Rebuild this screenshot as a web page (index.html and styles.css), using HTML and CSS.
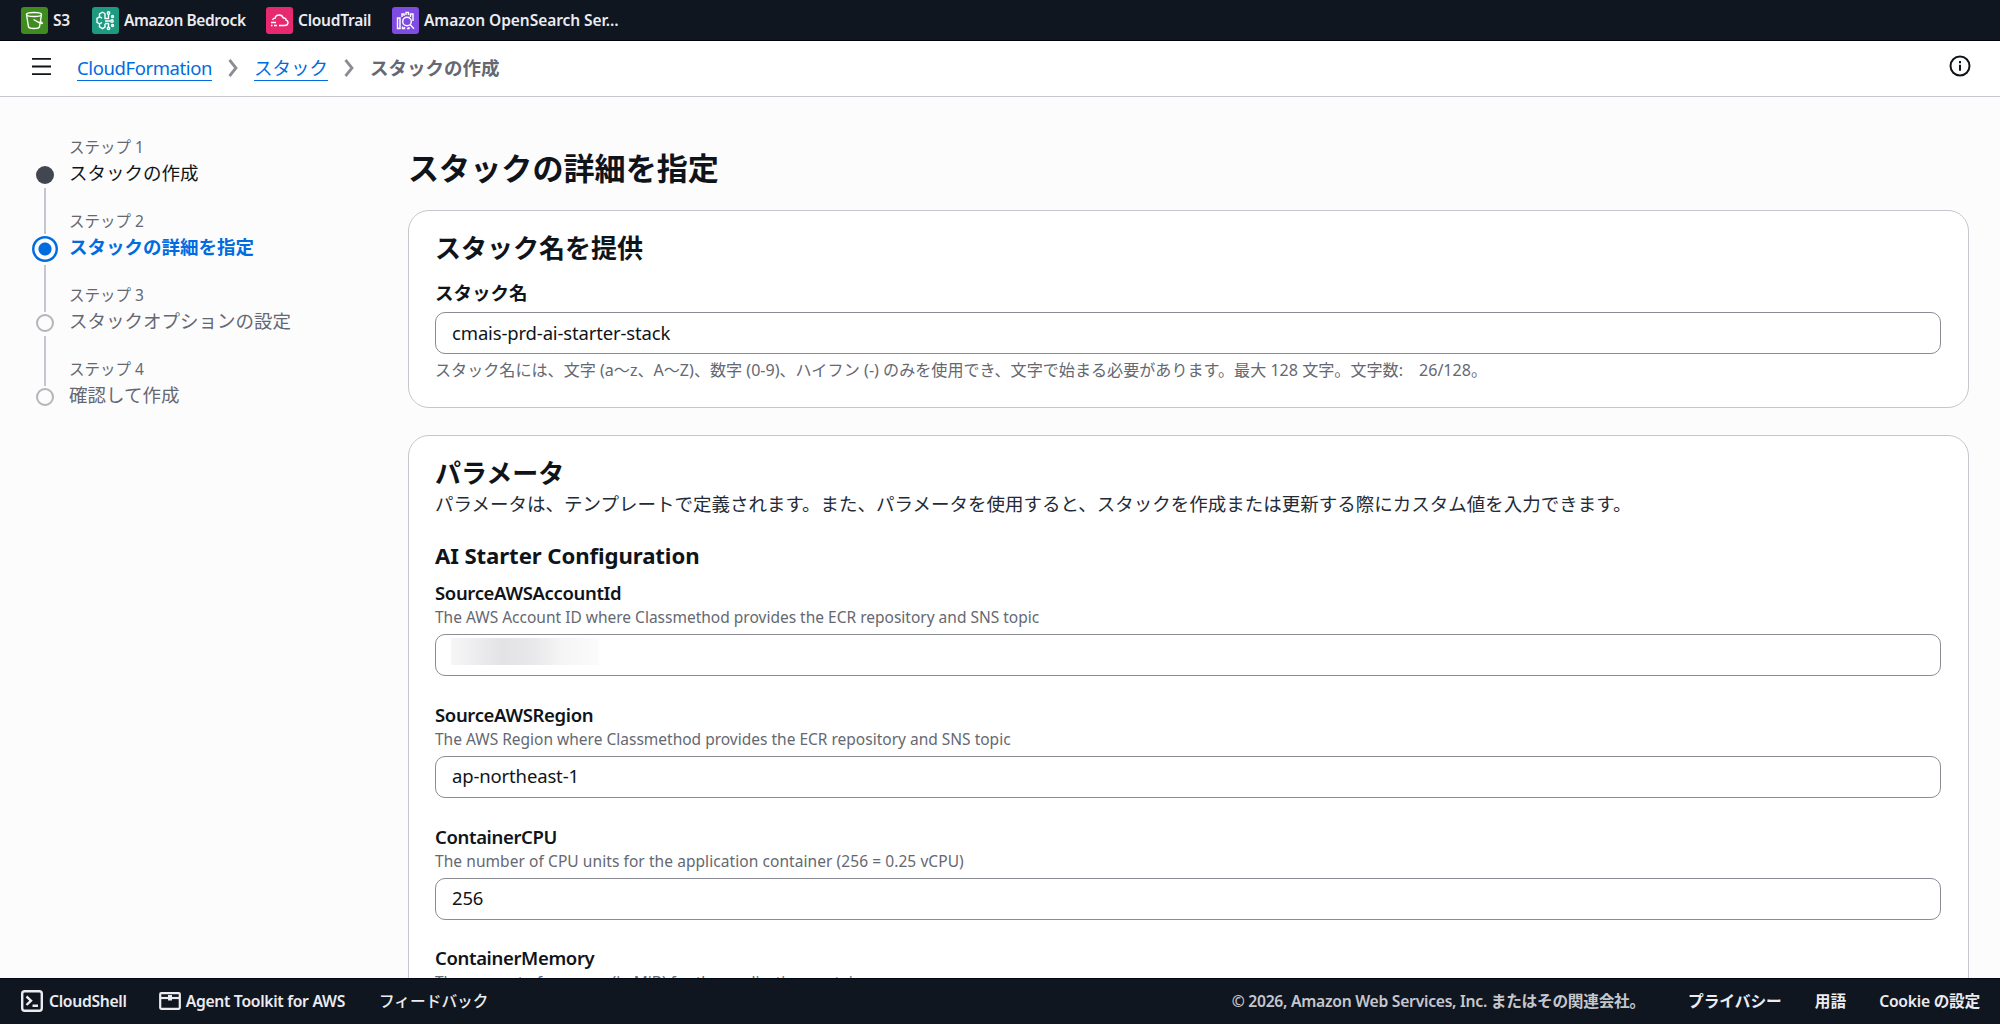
FILE: index.html
```html
<!DOCTYPE html>
<html lang="ja">
<head>
    <meta charset="UTF-8">
    <meta name="viewport" content="width=device-width, initial-scale=1.0">
    <title>スタックの作成 | CloudFormation</title>
    <link rel="stylesheet" href="styles.css">
</head>
<body>
    <nav class="favorites">
        <a class="favorite s3" href="#">
            <svg class="service-icon" viewBox="0 0 27 27">
                <rect class="tile" width="27" height="27" rx="3"/>
                <ellipse cx="13" cy="7.5" rx="7.5" ry="2"/>
                <path d="M5.500 7.500l2 12.300c.4 1.200 2.700 1.700 5.500 1.700s5.100-.5 5.500-1.700l2-12.300M12.500 12.500l6.500 3.600c3 1.200 3.200 0 .8-1.600"/>
            </svg>
            <span class="favorite-name">S3</span>
        </a>
        <a class="favorite bedrock" href="#">
            <svg class="service-icon" viewBox="0 0 27 27">
                <rect class="tile" width="27" height="27" rx="3"/>
                <path d="M13 6.500l-2.500-1.300-3 1.700v3l-2.500 1.500v4l2.500 1.500v3l3 1.800 2.500-1.500v-3.500M7.500 9.900l2.500 1.300M7.500 17l2.500-1.600M13 6.500v5h3.500v-4M13 14h5.500M13 16.500h3.500v3.500"/>
                <circle cx="16.500" cy="6" r="1.200"/><circle cx="20" cy="14" r="1.200"/><circle cx="16.500" cy="21.300" r="1.200"/><circle cx="20.500" cy="9.500" r="1"/><circle cx="20.500" cy="18.500" r="1"/>
            </svg>
            <span class="favorite-name">Amazon Bedrock</span>
        </a>
        <a class="favorite cloudtrail" href="#">
            <svg class="service-icon" viewBox="0 0 27 27">
                <rect class="tile" width="27" height="27" rx="3"/>
                <path d="M6.500 13c.5-1.300 1.500-1.900 2.700-1.900.3-2.200 2-3.100 4-3.100 2.200 0 3.500 1.200 4.100 3 2.100-.2 2.700 1 2.700 2 1.300.5 2 1.400 2 2.600 0 1.900-1.400 2.900-3.300 2.900H13M5 15.500h5M5 18.500h1.500M8 18.500h3"/>
            </svg>
            <span class="favorite-name">CloudTrail</span>
        </a>
        <a class="favorite opensearch" href="#">
            <svg class="service-icon" viewBox="0 0 27 27">
                <rect class="tile" width="27" height="27" rx="3"/>
                <circle cx="15" cy="14.500" r="4.300"/>
                <path d="M18.300 17.800l3.700 4M5.500 11h2.500v10.500h-2.500zM10 10V7h2v2M14 8V5.500h2.500V8M18.500 10V7h2.500v7M10.500 19.500v2h2v-1.500M15 21.500h2v-1.500"/>
            </svg>
            <span class="favorite-name">Amazon OpenSearch Ser…</span>
        </a>
    </nav>

    <header class="page-header">
        <svg class="menu-icon" viewBox="0 0 20 20"><path d="M0 2h20M0 10h20M0 18h20"/></svg>
        <ol class="breadcrumbs">
            <li><a class="crumb-service" href="#">CloudFormation</a></li>
            <li><svg class="chevron" viewBox="0 0 10 18"><path d="M1.500 1l6.500 8-6.500 8"/></svg></li>
            <li><a href="#">スタック</a></li>
            <li><svg class="chevron" viewBox="0 0 10 18"><path d="M1.500 1l6.500 8-6.500 8"/></svg></li>
            <li class="current">スタックの作成</li>
        </ol>
        <svg class="info-icon" viewBox="0 0 22 22"><circle cx="11" cy="11" r="9.500"/><path d="M11 9.800v6M11 6v2.200"/></svg>
    </header>

    <main class="layout">
        <ol class="steps">
            <li class="step done">
                <span class="marker"></span>
                <small>ステップ 1</small>
                <span class="step-name">スタックの作成</span>
            </li>
            <li class="step active">
                <span class="marker"></span>
                <small>ステップ 2</small>
                <span class="step-name">スタックの詳細を指定</span>
            </li>
            <li class="step">
                <span class="marker"></span>
                <small>ステップ 3</small>
                <span class="step-name">スタックオプションの設定</span>
            </li>
            <li class="step">
                <span class="marker"></span>
                <small>ステップ 4</small>
                <span class="step-name">確認して作成</span>
            </li>
        </ol>

        <form class="content">
            <h1>スタックの詳細を指定</h1>

            <section class="card">
                <h2>スタック名を提供</h2>
                <div class="form-group stack-name">
                    <label for="stackName">スタック名</label>
                    <input type="text" id="stackName" value="cmais-prd-ai-starter-stack">
                    <small>スタック名には、文字 (a〜z、A〜Z)、数字 (0-9)、ハイフン (-) のみを使用でき、文字で始まる必要があります。最大 128 文字。文字数:<span class="count">26/128。</span></small>
                </div>
            </section>

            <section class="card">
                <h2>パラメータ</h2>
                <p class="description">パラメータは、テンプレートで定義されます。また、パラメータを使用すると、スタックを作成または更新する際にカスタム値を入力できます。</p>
                <h3>AI Starter Configuration</h3>
                <div class="form-group">
                    <label for="accountId">SourceAWSAccountId</label>
                    <small>The AWS Account ID where Classmethod provides the ECR repository and SNS topic</small>
                    <div class="input-wrap">
                        <input type="text" id="accountId">
                        <span class="redacted"></span>
                    </div>
                </div>
                <div class="form-group">
                    <label for="region">SourceAWSRegion</label>
                    <small>The AWS Region where Classmethod provides the ECR repository and SNS topic</small>
                    <input type="text" id="region" value="ap-northeast-1">
                </div>
                <div class="form-group">
                    <label for="cpu">ContainerCPU</label>
                    <small class="cpu-hint">The number of CPU units for the application container (256 = 0.25 vCPU)</small>
                    <input type="text" id="cpu" value="256">
                </div>
                <div class="form-group">
                    <label for="memory">ContainerMemory</label>
                    <small>The amount of memory (in MiB) for the application container</small>
                    <input type="text" id="memory" value="512">
                </div>
            </section>
        </form>
    </main>

    <footer class="footer">
        <a class="tool" href="#">
            <svg class="shell-icon" viewBox="0 0 22 22"><rect x="1.200" y="1.200" width="19.600" height="19.600" rx="2.500"/><path d="M5.500 6.500l4.500 4.200-4.500 4.300M11.500 15.800h5.500"/></svg>
            <span class="shell-name">CloudShell</span>
        </a>
        <a class="tool toolkit" href="#">
            <svg class="toolkit-icon" viewBox="0 0 22 18"><rect x="1.200" y="1.200" width="19.600" height="15.600" rx="1"/><path d="M1.200 6h19.600"/><path class="clasp" d="M11 3v5.500"/></svg>
            <span class="toolkit-name">Agent Toolkit for AWS</span>
        </a>
        <a class="feedback" href="#">フィードバック</a>
        <span class="copyright">© 2026, Amazon Web Services, Inc. またはその関連会社。</span>
        <a class="privacy" href="#">プライバシー</a>
        <a class="terms" href="#">用語</a>
        <a class="cookie" href="#">Cookie の設定</a>
    </footer>
</body>
</html>
```

FILE: styles.css
```css
* {
    box-sizing: border-box;
}
body {
    margin: 0;
    height: 100vh;
    overflow: hidden;
    display: flex;
    flex-direction: column;
    font-family: "Noto Sans", "Noto Sans CJK JP", sans-serif;
    font-size: 18.5px;
    line-height: 26px;
    color: #0f141a;
    background-color: #fcfcfd;
}
a {
    color: inherit;
    text-decoration: none;
}
svg {
    flex: none;
    fill: none;
    stroke: currentColor;
}
ol {
    list-style: none;
    margin: 0;
    padding: 0;
}
h1, h2, h3, p {
    margin: 0;
}

/* Favorites bar */
.favorites {
    flex: none;
    height: 41px;
    padding-left: 21px;
    display: flex;
    align-items: center;
    background-color: #0f1620;
    border-bottom: 1px solid #00040c;
    color: #ebebf0;
    font-size: 15.5px;
    font-weight: 600;
    letter-spacing: -0.25px;
    white-space: nowrap;
}
.favorite {
    display: flex;
    align-items: center;
    gap: 5px;
}
.s3 { width: 71px; }
.bedrock {
    width: 174px;
    letter-spacing: -0.4px;
}
.cloudtrail { width: 126px; }
.opensearch { letter-spacing: -0.05px; }
.service-icon {
    width: 27px;
    height: 33px;
    stroke: #fff;
    stroke-width: 1.4;
}
.tile { stroke: none; }
.s3 .tile { fill: #3f8b1f; }
.bedrock .tile { fill: #1d9a80; }
.cloudtrail .tile { fill: #e7296f; }
.opensearch .tile { fill: #7f4be0; }

/* Breadcrumbs */
.page-header {
    flex: none;
    height: 56px;
    padding: 0 28px 2px 32px;
    display: flex;
    align-items: center;
    background-color: #fff;
    border-bottom: 1px solid #c6c6cd;
}
.menu-icon {
    width: 19px;
    height: 19px;
    margin: 0 26px 3px 0;
    stroke-width: 2;
}
.breadcrumbs {
    display: flex;
    align-items: center;
}
.breadcrumbs a {
    display: block;
    color: #006ce0;
    line-height: 25px;
    border-bottom: 1px solid #006ce0;
}
.breadcrumbs .crumb-service {
    letter-spacing: -0.4px;
}
.chevron {
    display: block;
    width: 10px;
    height: 18px;
    margin: 0 16px;
    stroke: #8c8c94;
    stroke-width: 2.8;
}
.current {
    color: #656871;
    font-weight: 600;
}
.info-icon {
    width: 22px;
    height: 22px;
    margin: 0 1px 4px auto;
    stroke-width: 2;
}

.layout {
    flex: 1;
    min-height: 0;
    overflow: hidden;
    display: flex;
}

/* Wizard steps */
.steps {
    flex: none;
    width: 408px;
    padding: 38px 0 0 32px;
}
.step {
    height: 74px;
    display: grid;
    grid-template-columns: 26px 1fr;
    grid-template-rows: 25px 1fr;
    column-gap: 11px;
    color: #656871;
    position: relative;
}
.step small {
    grid-column: 2;
    grid-row: 1;
    font-size: 15.5px;
    line-height: 24px;
}
.step-name {
    grid-column: 2;
    grid-row: 2;
}
.marker {
    grid-column: 1;
    grid-row: 2;
    width: 18px;
    height: 18px;
    margin: 6px 0 0 4px;
    border: 2px solid #b4b4bb;
    border-radius: 50%;
}
.step:not(:last-child)::after {
    content: "";
    position: absolute;
    left: 12px;
    top: 53px;
    width: 2px;
    height: 50px;
    background-color: #c6c6cd;
}
.done:not(:last-child)::after {
    height: 46px;
}
.active:not(:last-child)::after {
    top: 56px;
    height: 47px;
}
.done .step-name {
    color: #0f141a;
}
.done .marker {
    border: none;
    background-color: #424650;
}
.active .step-name {
    color: #006ce0;
    font-weight: 700;
}
.active .marker {
    width: 26px;
    height: 26px;
    margin: 2px 0 0;
    border: none;
    background: radial-gradient(circle, #006ce0 6px, transparent 7px, transparent 10px, #006ce0 11px);
}

/* Form */
.content {
    width: 1561px;
}
h1 {
    padding: 50px 0 20px;
    font-size: 31.1px;
    line-height: 43px;
    font-weight: 600;
}
.card {
    margin-bottom: 27px;
    padding: 21px 27px 26px 26px;
    background-color: #fff;
    border: 1px solid #c6c6cd;
    border-radius: 21px;
}
h2 {
    font-size: 26px;
    line-height: 32px;
    font-weight: 600;
}
h3 {
    margin: 25px 0 10px;
    font-size: 22.2px;
    line-height: 28px;
    font-weight: 700;
    letter-spacing: -0.1px;
}
.description {
    margin-top: 2px;
    color: #232b37;
}
.form-group {
    height: 121.8px;
    display: flex;
    flex-direction: column;
}
.form-group label {
    line-height: 26px;
    font-weight: 600;
    letter-spacing: -0.35px;
}
.form-group small {
    font-size: 15.5px;
    line-height: 22px;
    color: #656871;
}
.form-group .cpu-hint {
    letter-spacing: 0.07px;
}
.form-group input {
    width: 100%;
    height: 42px;
    margin-top: 6px;
    padding: 0 16px 2px;
    font: inherit;
    letter-spacing: -0.15px;
    color: #0f141a;
    background-color: #fff;
    border: 1px solid #8c8c94;
    border-radius: 10px;
}
.form-group.stack-name {
    height: auto;
    margin-top: 16px;
}
.stack-name label {
    letter-spacing: 0;
}
.form-group.stack-name small {
    margin-top: 5px;
    font-size: 16.08px;
}
.count {
    margin-left: 16px;
}
.input-wrap {
    position: relative;
}
.redacted {
    position: absolute;
    left: 16px;
    top: 10px;
    width: 148px;
    height: 27px;
    background: linear-gradient(90deg, #f6f6f7, #e3e3e6 35%, #e8e8ea 55%, #f5f5f6 75%, #fbfbfb);
}

/* Footer */
.footer {
    flex: none;
    height: 46px;
    padding: 0 20px 1px 21px;
    display: flex;
    align-items: center;
    background-color: #0f1620;
    border-top: 1px solid #000818;
    color: #ebebf0;
    font-size: 15.7px;
    font-weight: 600;
    white-space: nowrap;
}
.tool {
    display: flex;
    align-items: center;
    gap: 6px;
    letter-spacing: -0.3px;
}
.shell-icon {
    width: 22px;
    height: 22px;
    stroke-width: 2.4;
}
.toolkit-icon {
    width: 22px;
    height: 18px;
    stroke-width: 2.2;
}
.clasp {
    stroke-width: 4;
}
.toolkit {
    margin-left: 32px;
}
.toolkit-icon + .toolkit-name {
    margin-left: -1px;
}
.feedback {
    margin-left: 34px;
    font-weight: 500;
}
.copyright {
    margin-left: auto;
    color: #c6c6cd;
    letter-spacing: -0.27px;
}
.privacy {
    margin-left: 43px;
}
.terms {
    margin-left: 33px;
}
.cookie {
    margin-left: 33px;
    letter-spacing: -0.25px;
}
```
